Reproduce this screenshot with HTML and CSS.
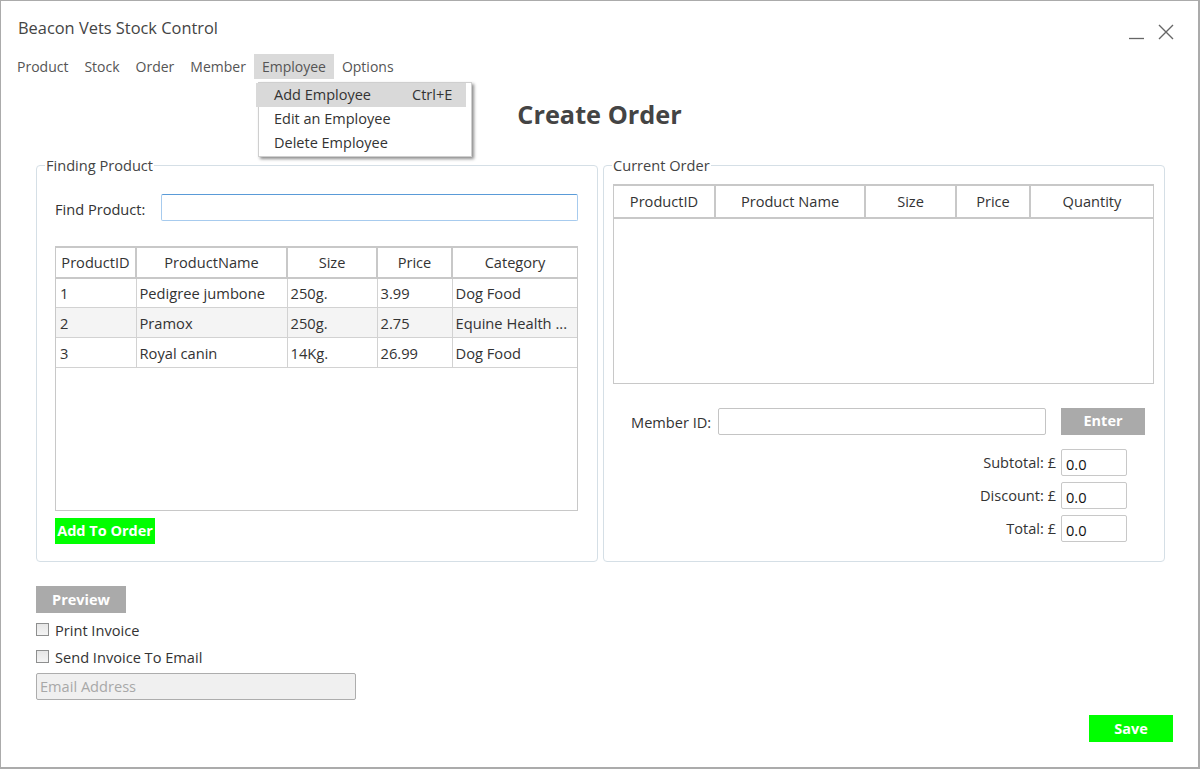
FILE: index.html
```html
<!DOCTYPE html>
<html lang="en">
<head>
<meta charset="utf-8">
<title>Beacon Vets Stock Control</title>
<link rel="stylesheet" href="styles.css">
</head>
<body>
<div class="window">
  <div class="titlebar">
    <div class="app-title">Beacon Vets Stock Control</div>
    <div class="win-controls">
      <svg class="ctl" width="16" height="16" viewBox="0 0 16 16"><line x1="0" y1="14.5" x2="15" y2="14.5" stroke="#666" stroke-width="1.3"/></svg>
      <svg class="ctl" width="16" height="16" viewBox="0 0 16 16"><path d="M1 1 L15 15 M15 1 L1 15" stroke="#666" stroke-width="1.4" fill="none"/></svg>
    </div>
  </div>
  <div class="menubar">
    <span class="menu-item">Product</span>
    <span class="menu-item">Stock</span>
    <span class="menu-item">Order</span>
    <span class="menu-item">Member</span>
    <span class="menu-item active">Employee</span>
    <span class="menu-item">Options</span>
  </div>

  <div class="dropdown">
    <div class="dd-item hl"><span class="dd-name">Add Employee</span><span class="dd-key">Ctrl+E</span></div>
    <div class="dd-item"><span class="dd-name">Edit an Employee</span></div>
    <div class="dd-item"><span class="dd-name">Delete Employee</span></div>
  </div>

  <h1 class="heading">Create Order</h1>

  <div class="groups">
    <fieldset class="group group-left">
      <legend>Finding Product</legend>
      <div class="find-row">
        <label class="find-label">Find Product:</label>
        <div class="input find-input"></div>
      </div>
      <div class="grid grid-left">
        <table>
          <colgroup><col class="c1"><col class="c2"><col class="c3"><col class="c4"><col class="c5"></colgroup>
          <thead>
            <tr><th>ProductID</th><th>ProductName</th><th>Size</th><th>Price</th><th>Category</th></tr>
          </thead>
          <tbody>
            <tr><td>1</td><td>Pedigree jumbone</td><td>250g.</td><td>3.99</td><td>Dog Food</td></tr>
            <tr class="alt"><td>2</td><td>Pramox</td><td>250g.</td><td>2.75</td><td>Equine Health ...</td></tr>
            <tr><td>3</td><td>Royal canin</td><td>14Kg.</td><td>26.99</td><td>Dog Food</td></tr>
          </tbody>
        </table>
      </div>
      <div class="btn btn-green add-btn">Add To Order</div>
    </fieldset>

    <fieldset class="group group-right">
      <legend>Current Order</legend>
      <div class="grid grid-right">
        <table>
          <colgroup><col class="r1"><col class="r2"><col class="r3"><col class="r4"><col class="r5"></colgroup>
          <thead>
            <tr><th class="th-tall">ProductID</th><th class="th-tall">Product Name</th><th class="th-tall">Size</th><th class="th-tall">Price</th><th class="th-tall">Quantity</th></tr>
          </thead>
        </table>
      </div>
      <div class="member-row">
        <label class="member-label">Member ID:</label>
        <div class="input member-input"></div>
        <div class="btn btn-gray enter-btn">Enter</div>
      </div>
      <div class="totals">
        <div class="total-row"><span class="total-label">Subtotal: £</span><div class="input total-input">0.0</div></div>
        <div class="total-row"><span class="total-label">Discount: £</span><div class="input total-input">0.0</div></div>
        <div class="total-row"><span class="total-label">Total: £</span><div class="input total-input">0.0</div></div>
      </div>
    </fieldset>
  </div>

  <div class="bottom">
    <div class="btn btn-gray preview-btn">Preview</div>
    <div class="check-row"><span class="checkbox"></span><span>Print Invoice</span></div>
    <div class="check-row"><span class="checkbox"></span><span>Send Invoice To Email</span></div>
    <div class="input email-input">Email Address</div>
  </div>
  <div class="save-row">
    <div class="btn btn-green save-btn">Save</div>
  </div>
</div>
</body>
</html>
```

FILE: styles.css
```css
* { box-sizing: border-box; }
html, body { margin: 0; padding: 0; background: #fff; }
body { font-family: "Open Sans", "Noto Sans", sans-serif; color: #333; }

.window {
  position: relative;
  width: 1200px;
  height: 769px;
  border: 1px solid #ababab;
  border-right-width: 2px;
  border-bottom-width: 2px;
  background: #fff;
  display: flex;
  flex-direction: column;
  overflow: hidden;
}

.titlebar {
  height: 53px;
  display: flex;
  justify-content: space-between;
  align-items: flex-start;
  padding: 16px 24px 0 17px;
}
.app-title { font-size: 16.4px; line-height: 22px; color: #444; }
.win-controls { display: flex; gap: 13px; margin-top: 7px; }
.ctl { display: block; }

.menubar { height: 25px; display: flex; padding-left: 8px; }
.menu-item { padding: 0 8px; line-height: 25px; font-size: 14px; color: #555; }
.menu-item.active { background: #dadada; }

.dropdown {
  position: absolute;
  left: 257px;
  top: 81px;
  width: 214px;
  height: 75px;
  background: #fff;
  border: 1px solid #cfcfcf;
  box-shadow: 2px 2px 3px rgba(0,0,0,0.45);
}
.dd-item { height: 24px; line-height: 24px; display: flex; padding-left: 15px; font-size: 14.5px; color: #333; }
.dd-item.hl { background: #d9d9d9; margin-left: -3px; padding-left: 18px; margin-right: 5px; }
.dd-name { width: 138px; }

.heading {
  margin: 18px 0 0;
  text-align: center;
  font-size: 25.3px;
  line-height: 34px;
  font-weight: 700;
  color: #444;
}

.groups { display: flex; gap: 5px; padding-left: 35px; margin-top: 24px; }
.group {
  margin: 0;
  width: 562px;
  border: 1px solid #d5dfe6;
  border-radius: 4px;
  min-width: 0;
}
.group legend {
  padding: 0 1px;
  font-size: 14.6px;
  line-height: 20px;
  color: #444;
}
.group-left { padding: 19px 18px 17px 18px; }
.group-left legend { margin-left: -10px; }
.group-right { padding: 9px 9px 17px 9px; }
.group-right legend { margin-left: -1px; }

.find-row { display: flex; align-items: center; }
.find-label { width: 106px; font-size: 14.6px; position: relative; top: 1px; }
.input {
  height: 27px;
  border: 1px solid #c9c9c9;
  border-radius: 2px;
  background: #fff;
}
.find-input { width: 417px; border-color: #a7cbee; border-top-color: #5a9bd8; }

.grid { border: 1px solid #c8c8c8; background: #fff; overflow: hidden; }
.grid-left { margin-top: 25px; height: 265px; width: 523px; }
.grid-right { height: 200px; width: 541px; }
.grid table { width: 100%; border-collapse: collapse; table-layout: fixed; }
.grid th {
  height: 30px;
  font-weight: 400;
  font-size: 14.6px;
  color: #333;
  border: 2px solid #c8c8c8;
  border-top: 1px solid #c8c8c8;
  border-left: none;
  text-align: center;
  padding: 0;
}
.grid th.th-tall { height: 32px; }
.grid th:last-child { border-right: none; }
.grid td {
  height: 30px;
  font-size: 14.7px;
  border-right: 1px solid #d2d2d2;
  border-bottom: 1px solid #d2d2d2;
  padding: 0 3px;
  white-space: nowrap;
  overflow: hidden;
}
.grid td:first-child { padding-left: 4px; }
.grid td:last-child { border-right: none; }
.grid tr.alt td { background: #f4f4f4; }
.c1 { width: 80px; } .c2 { width: 151px; } .c3 { width: 90px; } .c4 { width: 75px; } .c5 { width: 125px; }
.r1 { width: 101px; } .r2 { width: 150px; } .r3 { width: 91px; } .r4 { width: 74px; } .r5 { width: 123px; }

.btn {
  color: #fff;
  font-weight: 700;
  font-size: 14.5px;
  text-align: center;
  height: 27px;
  line-height: 27px;
}
.btn-green { background: #00ff00; }
.btn-gray { background: #aaaaaa; }
.add-btn { width: 100px; height: 26px; line-height: 25px; margin-top: 7px; }

.member-row { display: flex; align-items: center; margin-top: 24px; padding-left: 18px; }
.member-label { width: 87px; font-size: 14.6px; }
.member-input { width: 328px; border-color: #c4c4c4; }
.enter-btn { width: 84px; margin-left: 15px; line-height: 26px; }

.totals { display: flex; flex-direction: column; align-items: flex-end; gap: 6px; margin-top: 14px; padding-right: 28px; }
.total-row { display: flex; align-items: center; }
.total-label { font-size: 14.6px; margin-right: 5px; position: relative; top: -1px; }
.total-input { width: 66px; font-size: 14.6px; color: #111; padding: 3px 0 0 4px; line-height: 22px; border-color: #c8c8c8; }

.bottom { padding-left: 35px; margin-top: 24px; }
.preview-btn { width: 90px; }
.check-row { display: flex; align-items: center; height: 27px; font-size: 14.6px; }
.checkbox {
  width: 13px;
  height: 13px;
  border: 1px solid #8e8f8f;
  background: linear-gradient(#e6e6e6, #f4f4f4);
  margin-right: 6px;
}
.bottom .preview-btn + .check-row { margin-top: 3px; }
.email-input {
  width: 320px;
  margin-top: 3px;
  background: #f0f0f0;
  border-color: #adadad;
  color: #a8a8a8;
  font-size: 14.6px;
  line-height: 25px;
  padding-left: 3px;
}

.save-row { display: flex; justify-content: flex-end; padding-right: 25px; margin-top: 15px; }
.save-btn { width: 84px; }
```
